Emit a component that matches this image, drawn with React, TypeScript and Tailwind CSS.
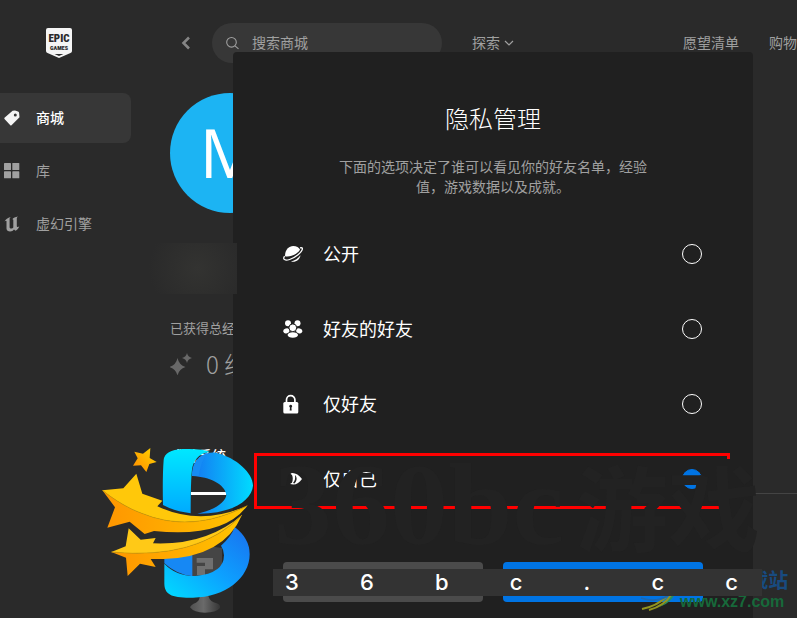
import { useState } from "react";

const navItems = [
  { name: "商城", icon: "tag" },
  { name: "库", icon: "grid" },
  { name: "虚幻引擎", icon: "unreal" },
];

const options = [
  { id: "public", name: "公开" },
  { id: "fof", name: "好友的好友" },
  { id: "friends", name: "仅好友" },
  { id: "private", name: "仅自己" },
];

const stripChars = ["3", "6", "b", "c", ".", "c", "c"];

function NavIcon({ name }: { name: string }) {
  if (name === "tag") {
    return (
      <svg viewBox="0 0 16 16" className="h-4 w-4" fill="#f5f5f5">
        <path
          fillRule="evenodd"
          d="M8.6.7 11 .4 14 1.6Q15 2 15.1 3L15.5 7.3 7.5 15.2Q6.9 15.7 6.3 15.2L.5 9Q0 8.4.5 7.8ZM11.300 3.400a1.500 1.500 0 1 0 0 3 1.500 1.500 0 0 0 0-3Z"
        />
      </svg>
    );
  }
  if (name === "grid") {
    return (
      <svg viewBox="0 0 16 16" className="h-4 w-4" fill="#a0a0a0">
        <rect x="0" y="0" width="7" height="7" rx="0.6" />
        <rect x="8.3" y="0" width="7" height="7" rx="0.6" />
        <rect x="0" y="8.3" width="7" height="7" rx="0.6" />
        <rect x="8.3" y="8.3" width="7" height="7" rx="0.6" />
      </svg>
    );
  }
  return (
    <svg viewBox="0 0 16 16" className="h-4 w-4" fill="#a0a0a0">
      <path d="M.5 5.5C1.6 3.4 3.8 1.6 6.6 1L5.6 2.6v8.6c0 1 .9 1.5 1.9 1.4.8-.1 1.4-.6 1.8-1.1V4c0-.7-.4-1-1-.8 1-1.2 3-2 5.6-2.6-.8.7-1.1 1.3-1.1 2v7.4c0 .8.5 1.2 1 1.1.6-.1 1-.4 1.5-.9-.7 2-2 3.7-3.8 4.6L10 13.4c-1 1.3-2 2-3.9 2-2 0-3.6-1-3.6-3V5.3c0-.8-1-.9-2 .2Z" />
    </svg>
  );
}

function OptionIcon({ id }: { id: string }) {
  if (id === "public") {
    return (
      <svg viewBox="0 0 20 18" className="h-[18px] w-5" fill="#fff">
        <path d="M2.1 11.3C1.6 5 5.8.9 10.200.9c3.300 0 5.900 1.600 6.900 3.900C14.500 8.800 7.700 12.500 2.100 11.300Z" />
        <path
          d="M17 2.900c1.700-.4 2.600 0 2.400 1.100-.4 3-7 8.700-12.800 10.500C3 15.600.8 15 .7 13.500c0-.8.3-1.600.9-2.300"
          fill="none"
          stroke="#fff"
          strokeWidth="1.300"
        />
        <path d="M8 16.500c4-1 7.300-3.300 9.500-6.300-.5 4.300-5 7.600-9.500 6.300Z" />
      </svg>
    );
  }
  if (id === "fof") {
    return (
      <svg viewBox="0 0 20 18" className="h-[18px] w-5" fill="#fff">
        <circle cx="5" cy="3.3" r="3" />
        <circle cx="14.5" cy="3.3" r="3" />
        <ellipse cx="3.4" cy="10.8" rx="3.200" ry="2.500" transform="rotate(-18 3.400 10.800)" />
        <ellipse cx="16.2" cy="10.8" rx="3.200" ry="2.500" transform="rotate(18 16.200 10.800)" />
        <circle cx="9.800" cy="7.800" r="3.900" stroke="#202020" strokeWidth="1" />
        <ellipse cx="9.800" cy="15" rx="5.200" ry="2.800" />
      </svg>
    );
  }
  if (id === "friends") {
    return (
      <svg viewBox="0 0 20 20" className="h-5 w-5">
        <path d="M3.500 9V5.800a4.200 4.200 0 0 1 8.400 0V9" fill="none" stroke="#fff" strokeWidth="1.700" />
        <rect x=".3" y="8" width="15" height="11.400" rx="1.500" fill="#fff" />
        <path d="M7.700 10.800a1.500 1.500 0 0 0-.7 2.800l-.3 3h2l-.3-3a1.500 1.500 0 0 0-.7-2.800Z" fill="#202020" />
      </svg>
    );
  }
  return (
    <svg viewBox="0 0 20 14" className="h-3.5 w-5">
      <path d="M7 1.500c4-1.500 8.500 1 12 5.500-3 4.500-7 6.500-12 5l2-1.200C10 8 10 5 9 3Z" fill="#fff" />
      <path d="M12 3c2.500 2.500 2 6-.5 8.500l-1.500-.5c2-2 2.500-5 2-8Z" fill="#202020" />
    </svg>
  );
}

function EpicLogo() {
  return (
    <div className="relative h-[30px] w-[26px]">
      <svg viewBox="0 0 26 30" className="absolute inset-0 h-full w-full">
        <path d="M2 0h22q2 0 2 2v21q0 1.500-1.500 2L13 30 1.500 25Q0 24.500 0 23V2Q0 0 2 0Z" fill="#f5f5f5" />
        <path d="M8.500 26h9l-4.500 2Z" fill="#2a2a2a" />
      </svg>
      <div className="relative flex flex-col items-center pt-1 font-['Liberation_Sans_Narrow','Roboto_Condensed',Roboto,sans-serif] font-black text-[#2a2a2a]">
        <span className="text-[11px] leading-[13px]">EPIC</span>
        <span className="text-[6px] leading-[6px]">GAMES</span>
      </div>
    </div>
  );
}

function StarLogo() {
  return (
    <svg viewBox="0 0 600 564" className="absolute left-[90px] top-[430px] h-[188px] w-[200px]">
      <defs>
        <linearGradient id="cyan" x1="0" y1="0" x2="0" y2="1">
          <stop offset="0" stopColor="#00e8ff" />
          <stop offset="1" stopColor="#00aaff" />
        </linearGradient>
        <linearGradient id="bow" x1="0" y1="0" x2="1" y2="0">
          <stop offset="0" stopColor="#1577f2" />
          <stop offset="1" stopColor="#00dcff" />
        </linearGradient>
        <linearGradient id="low" x1="0" y1="1" x2="1" y2="0">
          <stop offset="0" stopColor="#00dcff" />
          <stop offset=".5" stopColor="#0da0ff" />
          <stop offset="1" stopColor="#1a70ee" />
        </linearGradient>
        <linearGradient id="gold" x1="0" y1="1" x2="1" y2="0">
          <stop offset="0" stopColor="#ff8a00" />
          <stop offset="1" stopColor="#ffd800" />
        </linearGradient>
        <linearGradient id="tail" x1="0" y1="0" x2="1" y2="0">
          <stop offset="0" stopColor="#ff9500" />
          <stop offset="1" stopColor="#ffc400" />
        </linearGradient>
        <linearGradient id="stand" x1="0" y1="0" x2="1" y2="0">
          <stop offset="0" stopColor="#505050" />
          <stop offset=".45" stopColor="#6a6a6a" />
          <stop offset="1" stopColor="#353535" />
        </linearGradient>
      </defs>
      <path d="M302 362 370 350l26 4v88h-94Z" fill="#454545" />
      <path d="M320 384h49v34h-24v17h-24v-27h24v-10h-25Z" fill="#707070" />
      <path d="M330 498h25q5 18 25 22 12 4 10 14-12 14-45 14t-45-16q2-8 18-14 10-5 12-20Z" fill="url(#stand)" />
      <path d="M303 186h106v9H303Z" fill="#fff" />
      <path d="M308 138C322 80 350 63 380 69c60 14 110 62 109 98-3 42-60 85-167 84 52-11 86-36 87-57-5-32-50-53-101-56Z" fill="url(#bow)" />
      <path d="M221 90Q224 60 278 57q60-2 82 9-39 3-52 42-6 20-6 142-50-7-83-25-2-85 2-135Z" fill="url(#cyan)" />
      <path d="M360 66q-23 9-34 72h-20q-2-56 54-72Z" fill="#168cf5" />
      <path d="M223 385q39-8 84-25v79q-47-5-84-39Z" fill="#1688f4" />
      <path d="M434 291q45 34 45 82c0 70-73 130-170 130-57 0-85-5-86-42v-60q36 38 94 37 85-8 85-62 0-16-9-29 31-27 41-56Z" fill="url(#low)" />
      <path d="M37 181q60 48 118 69 150 62 317-23Q400 325 192 303L164 312 119 275 52 293 75 232Z" fill="url(#tail)" />
      <path d="M37 181 100 175 139 131 157 191 217 212 202 229q130 60 270-2-167 85-317 23-58-21-118-69Z" fill="#ffc80a" />
      <path d="M37 181q60 48 118 69 150 62 317-23" fill="none" stroke="#cf9a09" strokeWidth="2" />
      <path d="M64 366q260 25 392-111-54 126-234 132l-40 0 15 24-47-10-37 37-5-55Z" fill="url(#tail)" />
      <path d="M64 366 107 349 116 295 152 329 197 324 189 340q160 7 267-85-132 136-392 111Z" fill="#ffc917" />
      <path d="M64 366q260 25 392-111" fill="none" stroke="#cf9a09" strokeWidth="2" />
      <path d="M133 65 159 71 181 54 179 84 200 96 178 102 169 126 153 106 129 107 143 85Z" fill="url(#gold)" />
    </svg>
  );
}

export default function App() {
  const [selected, setSelected] = useState("private");

  return (
    <div className="relative flex min-h-screen overflow-hidden bg-[#2a2a2a] font-['Noto_Sans_CJK_SC',sans-serif] text-sm text-[#a0a0a0]">
      <aside className="w-[131px] shrink-0">
        <div className="flex h-[93px] items-start pl-[46px] pt-7">
          <EpicLogo />
        </div>
        <nav className="flex flex-col gap-[3px]">
          {navItems.map((item) => (
            <a
              key={item.name}
              href="#"
              className={
                item.icon === "tag"
                  ? "flex h-[50px] items-center gap-4 rounded-r-lg bg-[#373737] pl-1 font-medium text-white"
                  : "flex h-[50px] items-center gap-4 pl-1"
              }
            >
              <NavIcon name={item.icon} />
              <span className="pb-0.5">{item.name}</span>
            </a>
          ))}
        </nav>
      </aside>

      <main className="min-w-0 flex-1">
        <header className="flex h-[86px] items-center whitespace-nowrap pl-[50px]">
          <button aria-label="返回" className="w-[31px]">
            <svg viewBox="0 0 10 14" className="h-3.5 w-2.5" fill="none" stroke="#858585" strokeWidth="2.600">
              <path d="M8 1.500 2.500 7 8 12.500" />
            </svg>
          </button>
          <label className="flex h-10 w-[230px] shrink-0 items-center gap-3 rounded-full bg-[#373737] pl-3.5">
            <svg viewBox="0 0 14 14" className="h-3.5 w-3.5 shrink-0" fill="none" stroke="#a0a0a0" strokeWidth="1.100">
              <circle cx="5.500" cy="6.300" r="4.800" />
              <path d="m9 9.800 3.500 3" />
            </svg>
            <input
              aria-label="搜索商城"
              placeholder="搜索商城"
              className="w-40 bg-transparent pb-0.5 text-sm outline-none placeholder:text-[#a0a0a0]"
            />
          </label>
          <button className="ml-[30px] flex shrink-0 items-center gap-1 pb-0.5">
            探索
            <svg viewBox="0 0 10 6" className="mt-0.5 h-1.5 w-2.5" fill="none" stroke="#a0a0a0" strokeWidth="1.200">
              <path d="m1 1 4 4 4-4" />
            </svg>
          </button>
          <div className="ml-auto flex shrink-0 gap-[30px] pb-0.5">
            <a href="#">愿望清单</a>
            <a href="#">购物</a>
          </div>
        </header>

        <section className="pl-[39px] pt-[7px]">
          <div className="flex h-[120px] w-[120px] items-center justify-center rounded-full bg-[#1cb4f3] pb-0.5 font-['Open_Sans',sans-serif] text-[68px] text-white">
            M
          </div>
          <p className="mt-[105px] text-[13px] leading-5">已获得总经验</p>
          <div className="mt-2 flex h-9 items-center gap-3.5 text-2xl font-light">
            <svg viewBox="0 0 22 22" className="h-[22px] w-[22px]" fill="#686868">
              <path d="M7.500 5Q9 12 15.500 14 9 16 7.500 22.500 6 16-.5 14 6 12 7.500 5ZM17 0q.8 3.800 5 5-4.200 1.200-5 5-.8-3.800-5-5 4.200-1.200 5-5Z" />
            </svg>
            0 经验
          </div>
          <div className="mt-[61px] border-b border-[#444] pb-[26px] font-medium leading-6 text-white">成就系统</div>
        </section>
      </main>

      {/* frosted patch over the user name */}
      <div className="absolute left-[133px] top-[243px] z-20 h-[51px] w-[104px] bg-[radial-gradient(circle_at_62%_50%,#333331,#2a2a2a_70%)]" />

      <div className="absolute inset-0 z-10 flex pl-[233px] pt-[52px]">
        <form
          role="dialog"
          aria-label="隐私管理"
          className="flex w-[520px] flex-col rounded-t bg-[#202020] px-[50px] pt-12"
          onSubmit={(e) => e.preventDefault()}
        >
          <h1 className="text-center text-2xl font-light leading-9 text-white">隐私管理</h1>
          <p className="mx-auto mt-5 w-[320px] text-center leading-5">
            下面的选项决定了谁可以看见你的好友名单，经验值，游戏数据以及成就。
          </p>
          <div className="mt-5">
            {options.map((o) => (
              <label key={o.id} className="flex h-[75px] items-center text-lg text-white">
                <span className="w-10">
                  <OptionIcon id={o.id} />
                </span>
                <span className="flex-1 pb-0.5">{o.name}</span>
                <input
                  type="radio"
                  name="privacy"
                  checked={selected === o.id}
                  onChange={() => setSelected(o.id)}
                  className="mr-px h-5 w-5 appearance-none rounded-full border border-white checked:border-[#0074e4] checked:bg-[#0074e4]"
                />
              </label>
            ))}
          </div>
          <div className="mt-[46px] flex gap-5">
            <button type="button" aria-label="取消" className="h-10 flex-1 rounded bg-[#4b4b4b]" />
            <button type="submit" aria-label="保存" className="h-10 flex-1 rounded bg-[#0074e4]" />
          </div>
        </form>
      </div>

      <div className="pointer-events-none absolute inset-0 z-30">
        <div className="absolute left-[254px] top-[453px] h-14 w-[468px] border-y-[3px] border-l-[3px] border-[#ff0000]" />
        <div className="absolute left-[722px] top-[453px] h-1.5 w-2 border-r-[3px] border-t-[3px] border-[#ff0000]" />
        <div className="absolute left-[274px] top-[440px] flex items-baseline whitespace-nowrap font-['Liberation_Serif',serif] text-[116px] font-bold leading-[130px] text-[#222]">
          360bc
          <span className="ml-3 font-['Noto_Sans_CJK_SC',sans-serif] text-[92px] font-bold leading-[100px]">游戏</span>
        </div>
        <StarLogo />
        <div className="absolute left-[640px] top-[568px] flex items-end">
          <svg viewBox="0 0 40 42" className="h-[42px] w-10" fill="none">
            <path d="M12 39q16-3 24-21-1 16-24 21Z" fill="#289060" />
            <path d="M2 39q15-3 24-12M9 40q15-4 22-15" stroke="#93951e" strokeWidth="2" />
            <path d="M1 28q24 8 37-14" stroke="#1d67b0" strokeWidth="1.500" />
          </svg>
          <div className="flex flex-col items-end">
            <div className="-mr-1 text-xl font-bold leading-6 text-[#184b80]">下载站</div>
            <div className="font-['Liberation_Sans',sans-serif] text-base font-bold leading-5 text-[#17693a]">www.xz7.com</div>
          </div>
        </div>
        <div className="absolute left-[273px] top-[569px] flex h-[27px] w-[489px] items-center justify-between bg-[#333] pl-3 pr-6 font-[Inter,sans-serif] text-[22px] font-medium text-white">
          {stripChars.map((ch, i) => (
            <span key={i}>{ch}</span>
          ))}
        </div>
      </div>
    </div>
  );
}
